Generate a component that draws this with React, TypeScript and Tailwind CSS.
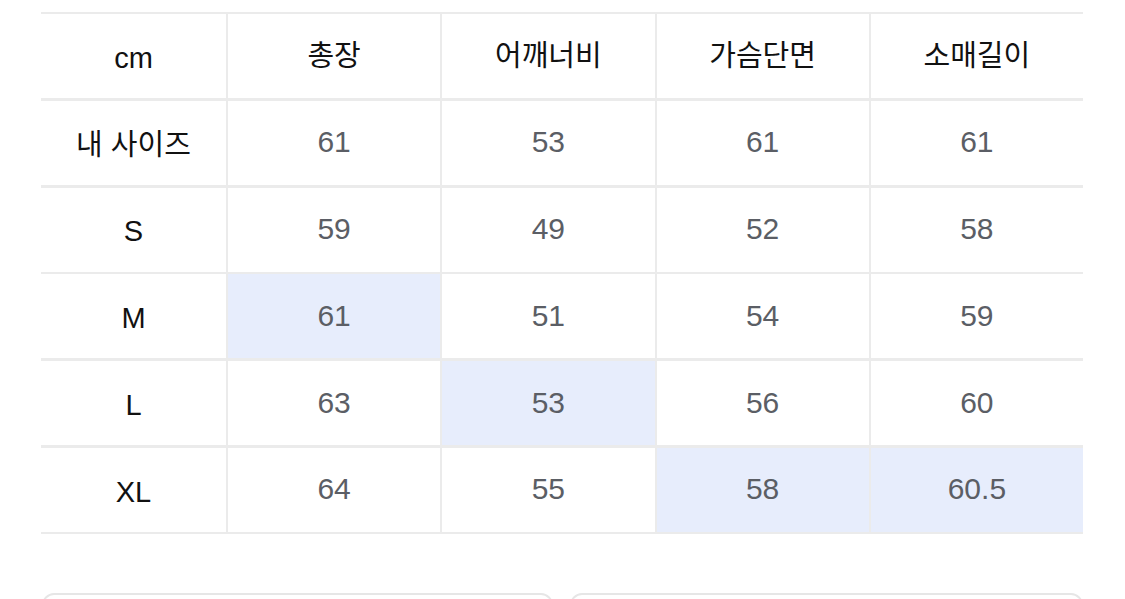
const headers = ["cm", "총장", "어깨너비", "가슴단면", "소매길이"];

const rows: { label: string; values: string[]; hi?: number[] }[] = [
  { label: "내 사이즈", values: ["61", "53", "61", "61"] },
  { label: "S", values: ["59", "49", "52", "58"] },
  { label: "M", values: ["61", "51", "54", "59"], hi: [0] },
  { label: "L", values: ["63", "53", "56", "60"], hi: [1] },
  { label: "XL", values: ["64", "55", "58", "60.5"], hi: [2, 3] },
];

const font = { fontFamily: '"Liberation Sans", "Noto Sans CJK KR", sans-serif' };

export default function App() {
  return (
    <div className="w-[1125px] h-[599px] overflow-hidden bg-white" style={font}>
      <div className="ml-[41px] mt-[12px] w-[1042px] border-y-[2.5px] border-[#ebebeb]">
        <div className="grid grid-cols-[185px_repeat(4,1fr)] gap-x-[2px] gap-y-[2.8px] bg-[#ebebeb]">
          {headers.map((h, i) => (
            <div
              key={h}
              className={
                "flex h-[84px] items-center justify-center bg-white text-[29px] text-[#111] " +
                (i === 0 ? "pt-[6px]" : "pt-[2px]")
              }
            >
              {h}
            </div>
          ))}
          {rows.map((r) => (
            <>
              <div
                key={r.label}
                className="flex h-[84px] items-center justify-center bg-white pt-[5px] text-[29px] text-[#111]"
              >
                {r.label}
              </div>
              {r.values.map((v, i) => (
                <div
                  key={r.label + i}
                  className={
                    "flex h-[84px] items-center justify-center pb-[2px] text-[30px] text-[#5b5e65] " +
                    (r.hi?.includes(i) ? "bg-[#e7edfc]" : "bg-white")
                  }
                >
                  {v}
                </div>
              ))}
            </>
          ))}
        </div>
      </div>
      <div className="mt-[59px] ml-[42px] flex gap-[17px]">
        <div className="h-[60px] w-[511px] rounded-[12px] border-2 border-[#e6e6e6]" />
        <div className="h-[60px] w-[513px] rounded-[12px] border-2 border-[#e6e6e6]" />
      </div>
    </div>
  );
}
